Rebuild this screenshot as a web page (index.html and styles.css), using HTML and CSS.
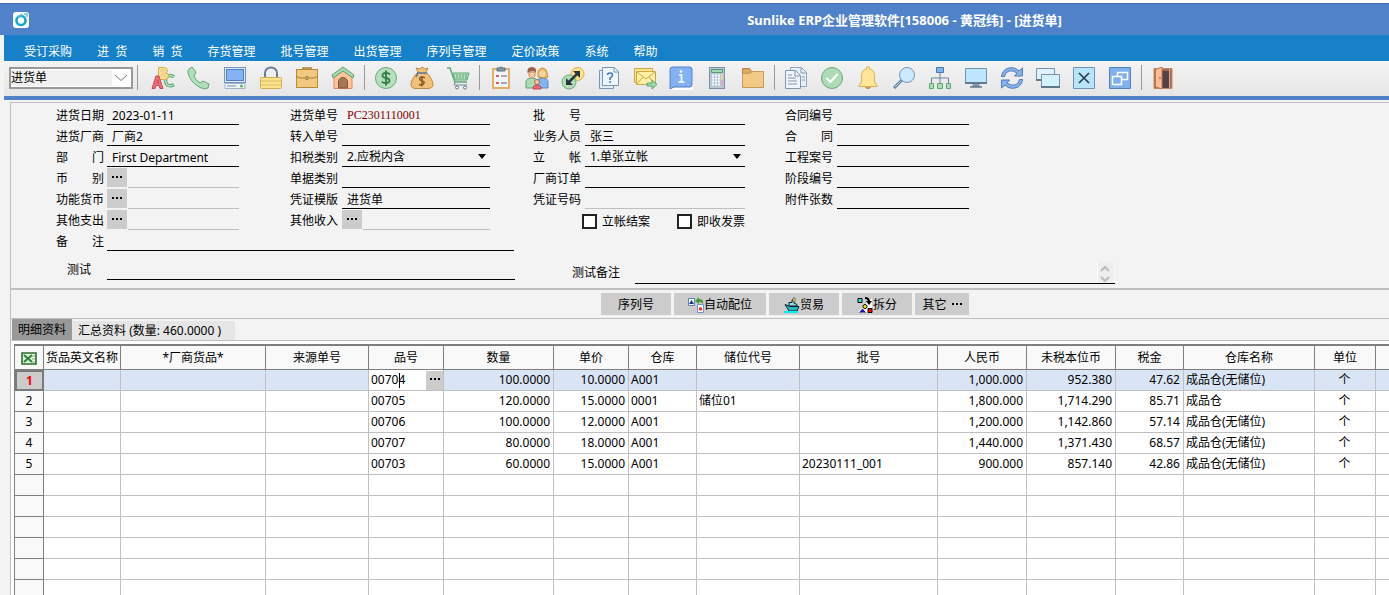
FILE: index.html
```html
<!DOCTYPE html>
<html lang="zh-CN">
<head>
<meta charset="utf-8">
<title>Sunlike ERP企业管理软件</title>
<link rel="stylesheet" href="styles.css">
</head>
<body>
<header class="titlebar">
  <svg class="logo" viewBox="0 0 16 16"><rect width="16" height="16" rx="3" fill="#fff"/><circle cx="8" cy="8.5" r="4.500" fill="none" stroke="#12a5d0" stroke-width="2.600"/><path d="M8 4.500l3 4-3 3-3-3z" fill="#fff"/><path d="M5 5L9 2M11 2h3v3" fill="none" stroke="#5cc6e2" stroke-width="1.500"/></svg>
  <h1>Sunlike ERP企业管理软件[158006 - 黄冠纬] - [进货单]</h1>
</header>
<div class="frame">
<nav class="menu">
  <a href="#">受订采购</a><a href="#">进&nbsp;&nbsp;货</a><a href="#">销&nbsp;&nbsp;货</a><a href="#">存货管理</a><a href="#">批号管理</a><a href="#">出货管理</a><a href="#">序列号管理</a><a href="#">定价政策</a><a href="#">系统</a><a href="#">帮助</a>
</nav>
<div class="toolbar">
  <div class="combo"><select aria-label="单据类型"><option>进货单</option></select><svg viewBox="0 0 14 8"><path d="M1 1l6 5.500L13 1" fill="none" stroke="#777"/></svg></div>
  <span class="sep first"></span>
  <button aria-label="字体"><svg viewBox="0 0 24 24"><path d="M23 11q-3-2.500-6-1t-2.500 5 3 4.500 5.500-1" fill="none" stroke="#5fa777" stroke-width="3.500"/><path d="M23 11q-3-2.500-6-1t-2.500 5 3 4.500 5.500-1" fill="none" stroke="#b5dfbd" stroke-width="1.500"/><path d="M7.500 1.500h5q4 0 4 3 0 2-2 2.500 3 0 3 3 0 3.500-4 3.500h-6z" fill="#fbe18b" stroke="#d3ae54"/><path d="M10.500 4h2.500v2h-2.500zM10.500 8.500h3v2h-3z" fill="#f3f3f3" stroke="#d3ae54" stroke-width=".6"/><path d="M1 22.500L5 10h3l4 12.500H9l-1-3H5l-1 3zM6 17h1.500L7 14z" fill="#ef6f78" stroke="#c94953"/></svg></button>
  <button aria-label="电话"><svg viewBox="0 0 24 24"><path d="M2 3l3-2 4 5-2 4q1 4 6 7l3-2 6 3-1 4q-3 2-8-.5Q3 16 1 7q-.5-3 1-4z" fill="#b1dfba" stroke="#61a775"/></svg></button>
  <button aria-label="电脑"><svg viewBox="0 0 24 24"><rect x="1.500" y="1.500" width="21" height="15" fill="#dce9f4" stroke="#7695b7"/><rect x="3.500" y="3.500" width="17" height="11" fill="#83b3f3" stroke="#527fc1"/><path d="M2 17.500h20v5H2z" fill="#eef4f8" stroke="#9db3c9"/><path d="M4 20h9" stroke="#6c89a8"/><circle cx="18.500" cy="20" r="1.500" fill="#4eb86c"/></svg></button>
  <button aria-label="锁定"><svg viewBox="0 0 24 24"><path d="M6 11V7a6 5.500 0 0 1 12 0v4" fill="none" stroke="#657f9b" stroke-width="2"/><rect x="1.500" y="11.500" width="21" height="11" rx="1" fill="#fbe38c" stroke="#d5ae55"/><path d="M2 15h20M2 19h20" stroke="#dfbe6a"/></svg></button>
  <button aria-label="公文包"><svg viewBox="0 0 24 24"><path d="M8 4V2h8v2" fill="none" stroke="#a77d32" stroke-width="1.500"/><rect x="1.500" y="3.500" width="21" height="18" fill="#f0c880" stroke="#b98a36"/><path d="M2 10q0 2 4 2h12q4 0 4-2" fill="none" stroke="#a77d32"/><path d="M11 10.500h2v3h-2z" fill="#f6dda0" stroke="#8e6727" stroke-width=".8"/></svg></button>
  <button aria-label="首页"><svg viewBox="0 0 24 24"><path d="M3 9l9-5 9 5v13.500H3z" fill="#ffc39a" stroke="#d78b62"/><path d="M1 9L12 1l11 8-1 3-10-7-10 7z" fill="#a7dab2" stroke="#5e9f70"/><path d="M7.500 22v-6a4.500 4.500 0 0 1 9 0v6z" fill="#a77751" stroke="#7a563e"/></svg></button>
  <span class="sep"></span>
  <button aria-label="金额"><svg viewBox="0 0 24 24"><circle cx="12" cy="12" r="10.500" fill="#b7dfbc" stroke="#69ab7b"/><path d="M16 8.500q-2-2-5-1.500T8.500 10q0 1.500 3.500 2t3.500 2.500Q15.500 17 12 17T8 15.500M12 4.500v15" fill="none" stroke="#327a49" stroke-width="1.800"/></svg></button>
  <button aria-label="钱袋"><svg viewBox="0 0 24 24"><path d="M8 6L6 2l4 1 2-2 3 2 3-1-2 4c3 3 7 8 7 13q0 3-5 3.500H6q-5 0-5-4C1 14 5 9 8 6z" fill="#f0c279" stroke="#bd8840"/><path d="M7 7h10M8 7l-2 4" stroke="#597290" stroke-width="1.500"/><path d="M15 12q-2-1.500-4-.8t-1 2.800l3 1.200q2 1 .5 2.800t-4.500.5M12 10v10.500" fill="none" stroke="#855d2c" stroke-width="1.500"/></svg></button>
  <button aria-label="购物车"><svg viewBox="0 0 24 24"><path d="M1 2h3l5 14h12" fill="none" stroke="#62a879" stroke-width="1.500"/><path d="M7 7h16l-2 7H9z" fill="#b2ddbc" stroke="#62a879"/><path d="M11 8v5M14 8v5M17 8v5M20 8v5" stroke="#62a879"/><path d="M9 16l-1 3h13" fill="none" stroke="#6f87a2"/><circle cx="11" cy="21.500" r="1.500" fill="#fff" stroke="#5c7490"/><circle cx="19" cy="21.500" r="1.500" fill="#fff" stroke="#5c7490"/></svg></button>
  <span class="sep"></span>
  <button aria-label="清单"><svg viewBox="0 0 24 24"><rect x="4" y="3" width="16" height="19" fill="#f3f4f5" stroke="#e5ae66" stroke-width="2"/><path d="M8 2h2q2-2 4 0h2v3H8z" fill="#8496a9" stroke="#5f7285"/><path d="M7 10h3M7 17h3" stroke="#e45865" stroke-width="2"/><path d="M12 10h6M12 17h6" stroke="#8293a7" stroke-width="1.500"/></svg></button>
  <button aria-label="客户"><svg viewBox="0 0 24 24"><path d="M1 22v-7q1-3 5-3h2q4 0 4 4v6z" fill="#abdab4" stroke="#60a672"/><path d="M12 22v-6q1-4 5-4 6 0 6 4v6z" fill="#82b5ec" stroke="#568bc7"/><path d="M13 11V6q1-4 5-4 4 1 4 5l1 4-4 1z" fill="#edc268" stroke="#bd913e"/><path d="M4 6h6v4q-3 4-6 0z" fill="#f8caa0" stroke="#c98f6c"/><path d="M2.500 7q-1-6 4.500-6 5 0 4 6-1-2-3-2-3 0-5.500 2z" fill="#9c6044"/><circle cx="17.500" cy="8" r="3" fill="#f8d0aa"/><path d="M8 23v-2q1-2 4-2t4 2v2z" fill="#ef6a72" stroke="#be4750"/><circle cx="12" cy="16" r="2.500" fill="#f8c69d" stroke="#a76b4a"/></svg></button>
  <button aria-label="转换"><svg viewBox="0 0 24 24"><circle cx="16.500" cy="8" r="6.500" fill="#fce389" stroke="#d5ae4e"/><circle cx="8" cy="16" r="7" fill="#b2dfb9" stroke="#66aa77"/><path d="M8 16l8-8" stroke="#28363f" stroke-width="2.500"/><path d="M12 5h7v7zM5 12v7h7z" fill="#28363f"/></svg></button>
  <button aria-label="帮助文档"><svg viewBox="0 0 24 24"><path d="M2.500 4.500h14v18h-14z" fill="#e1edf7" stroke="#7895b4"/><path d="M5.500 1.500h12l4 4v14h-16z" fill="#eef5fb" stroke="#7895b4"/><path d="M17 2v4h4" fill="none" stroke="#7895b4"/><path d="M10.500 9q0-2 2.500-2t2.500 2-2.500 3v2M12 16h2" fill="none" stroke="#4478bf" stroke-width="1.600"/></svg></button>
  <button aria-label="发送邮件"><svg viewBox="0 0 24 24"><path d="M1.500 2.500h18v14h-18z" fill="#fbe28b" stroke="#cda647"/><path d="M3.500 5.500h19v13h-19z" fill="#fff0a6" stroke="#cda647"/><path d="M4 6l9 7 9-7M4 18l6-7M22 18l-6-7" fill="none" stroke="#cda647"/><path d="M14 17h5v-3l5 4.500-5 4.500v-3h-5z" fill="#9fd8ad" stroke="#5ca472"/></svg></button>
  <button aria-label="信息"><svg viewBox="0 0 24 24"><path d="M0 0h24v24H0z" fill="#fff"/><path d="M3 1h18q2 0 2 2v16q0 2-2 2H5l-4 2V3q0-2 2-2z" fill="#83b1f2" stroke="#537dc3"/><path d="M10 9h2.500v7M9.500 16h6" fill="none" stroke="#fff" stroke-width="1.600"/><circle cx="12" cy="5.500" r="1.300" fill="#fff"/></svg></button>
  <button aria-label="计算器"><svg viewBox="0 0 24 24"><rect x="4.500" y="1.500" width="15" height="21" fill="#b8c8d9" stroke="#7890ab"/><path d="M6.500 3.500h11v3h-11z" fill="#a4d9b0" stroke="#56996b"/><path d="M7 9.500h8M7 12.500h8M7 15.500h8M7 18.500h8" stroke="#f7fbff" stroke-width="2" stroke-dasharray="2 1"/><path d="M16 9.500h2M16 12.500h2" stroke="#ffd978" stroke-width="2"/><path d="M16 15.500h2M16 18.500h2" stroke="#ef9ba0" stroke-width="2"/></svg></button>
  <button aria-label="文件夹"><svg viewBox="0 0 24 24"><path d="M1.500 2.500h7l2 3H22v15H1.500z" fill="#d9a966" stroke="#b78140"/><path d="M1.500 7.500h7l3-2h11v16h-21z" fill="#f3ca85" stroke="#c99a55"/></svg></button>
  <span class="sep"></span>
  <button aria-label="复制"><svg viewBox="0 0 24 24"><path d="M6.500 1.500h11l5 5v14h-16z" fill="#e7f0f7" stroke="#93a6b8"/><path d="M17 2v5h5M18 11h3M18 14h3" fill="none" stroke="#8296aa"/><path d="M1.500 4.500h10l5 5v13h-15z" fill="#eff5fa" stroke="#8296aa"/><path d="M11 5v5h5M4 9h4M4 12h8M4 15h9M4 18h9" fill="none" stroke="#8296aa"/></svg></button>
  <button aria-label="确认"><svg viewBox="0 0 24 24"><circle cx="12" cy="12" r="10.500" fill="#aedbb6" stroke="#67aa79"/><path d="M6.500 12l4 4 7-8" fill="none" stroke="#fff" stroke-width="2"/></svg></button>
  <button aria-label="提醒"><svg viewBox="0 0 24 24"><path d="M9.500 20.500a2.500 2 0 0 0 5 0z" fill="#dca84c" stroke="#bd8638"/><path d="M10.500 3V1h3v2q5 1 5 7v5q0 3 2.500 3.500v2H3v-2Q5.500 18 5.500 15v-5q0-6 5-7z" fill="#ffe797" stroke="#d9b05c"/></svg></button>
  <button aria-label="查找"><svg viewBox="0 0 24 24"><path d="M10 14l-8 8" stroke="#6683a4" stroke-width="3"/><path d="M9 15l-6 6" stroke="#b8cadc"/><circle cx="15" cy="9" r="7.500" fill="#cceaff" stroke="#7595b8"/></svg></button>
  <button aria-label="组织结构"><svg viewBox="0 0 24 24"><path d="M12 6v11M3.500 17v-5h17v5" fill="none" stroke="#6c849e"/><path d="M8.500 1.500h7v5h-7z" fill="#83b1ef" stroke="#4b75b7"/><path d="M1.500 17.500h4v5h-4zM9.500 17.500h5v5h-5zM18.500 17.500h4v5h-4z" fill="#b0ddb7" stroke="#5ea770"/></svg></button>
  <button aria-label="显示器"><svg viewBox="0 0 24 24"><path d="M9 17h6l1 4H8z" fill="#8597aa"/><path d="M6 21h12" stroke="#64798f" stroke-width="1.500"/><path d="M1.500 2.500h21v15h-21z" fill="#bde5fd" stroke="#7891ab"/><path d="M1 17h22" stroke="#64798f" stroke-width="2"/></svg></button>
  <button aria-label="刷新"><svg viewBox="0 0 24 24"><path d="M1.500 10.500Q2 5 7 2.500q7-2.500 12 2.500l3.500-3v8h-8l2.500-3q-4-3-8-2-4 1-4.500 5.500zM22.500 13.500q-.5 5.500-5.500 8-7 2.500-12-2.500l-3.500 3v-8h8L7 17q4 3 8 2 4-1 4.500-5.500z" fill="#85b2ee" stroke="#527cb9"/></svg></button>
  <button aria-label="窗口"><svg viewBox="0 0 24 24"><path d="M.5 2.500h18v12H.5z" fill="#dff2fe" stroke="#7891aa"/><path d="M0 14h19" stroke="#627991" stroke-width="2"/><path d="M5.500 8.500h18v12h-18z" fill="#d3f1ff" stroke="#7891aa"/><path d="M5 21h19" stroke="#627991" stroke-width="2"/></svg></button>
  <button aria-label="关闭窗口"><svg viewBox="0 0 24 24"><path d="M1.500 1.500h21v21h-21z" fill="#b9e4fb" stroke="#7293b9"/><path d="M7 7l10 10M17 7L7 17" stroke="#28394a" stroke-width="1.600"/></svg></button>
  <button aria-label="层叠窗口"><svg viewBox="0 0 24 24"><path d="M1.500 1.500h21v21h-21z" fill="#82b0ee" stroke="#527fbd"/><path d="M9.500 6.500h10v7h-10z" fill="#82b0ee" stroke="#fff" stroke-width="1.500"/><path d="M4.500 10.500h9v8h-9z" fill="#82b0ee" stroke="#fff" stroke-width="1.500"/></svg></button>
  <span class="sep"></span>
  <button aria-label="退出"><svg viewBox="0 0 24 24"><path d="M3 2.500h18v20H3z" fill="#a6674d" stroke="#c68766"/><path d="M11 5h7v17h-7z" fill="#4e434b"/><path d="M4.500 3.500L11 1v22l-6.500-2z" fill="#ffbd94" stroke="#ba7451"/><path d="M9 11v2" stroke="#784731"/><path d="M18.500 3v19" stroke="#e8aa85"/></svg></button>
</div>
<main class="doc">
  <form class="form">
    <div class="fields">
      <div class="field"><label for="f1">进货日期</label><input id="f1" value="2023-01-11"></div>
      <div class="field"><label for="f2">进货单号</label><input id="f2" class="number" value="PC2301110001"></div>
      <div class="field"><label for="f3">批　　号</label><input id="f3"></div>
      <div class="field"><label for="f4">合同编号</label><input id="f4"></div>

      <div class="field"><label for="f5">进货厂商</label><input id="f5" value="厂商2"></div>
      <div class="field"><label for="f6">转入单号</label><input id="f6"></div>
      <div class="field"><label for="f7">业务人员</label><input id="f7" value="张三"></div>
      <div class="field"><label for="f8">合　　同</label><input id="f8"></div>

      <div class="field"><label for="f9">部　　门</label><input id="f9" value="First Department"></div>
      <div class="field"><label for="f10">扣税类别</label><div class="drop"><select id="f10"><option>2.应税内含</option></select></div></div>
      <div class="field"><label for="f11">立　　帐</label><div class="drop"><select id="f11"><option>1.单张立帐</option></select></div></div>
      <div class="field"><label for="f12">工程案号</label><input id="f12"></div>

      <div class="field"><label for="f13">币　　别</label><button type="button" class="more" aria-label="选择币别"></button><input id="f13" class="dim"></div>
      <div class="field"><label for="f14">单据类别</label><input id="f14"></div>
      <div class="field"><label for="f15">厂商订单</label><input id="f15"></div>
      <div class="field"><label for="f16">阶段编号</label><input id="f16"></div>

      <div class="field"><label for="f17">功能货币</label><button type="button" class="more" aria-label="选择功能货币"></button><input id="f17" class="dim"></div>
      <div class="field"><label for="f18">凭证模版</label><input id="f18" value="进货单"></div>
      <div class="field"><label for="f19">凭证号码</label><input id="f19" class="dim"></div>
      <div class="field"><label for="f20">附件张数</label><input id="f20"></div>

      <div class="field"><label for="f21">其他支出</label><button type="button" class="more" aria-label="选择其他支出"></button><input id="f21" class="dim"></div>
      <div class="field"><label for="f22">其他收入</label><button type="button" class="more" aria-label="选择其他收入"></button><input id="f22" class="dim"></div>
      <div class="checks"><label><input type="checkbox">立帐结案</label><label><input type="checkbox">即收发票</label></div>

      <div class="field remark"><label for="f23">备　　注</label><input id="f23"></div>
    </div>
    <div class="tests">
      <div class="field test"><label for="f24">测试</label><input id="f24"></div>
      <div class="field memo"><label for="f25">测试备注</label><textarea id="f25" rows="1"></textarea>
        <svg viewBox="0 0 16 20"><path d="M0 0h16v20H0z" fill="#eee"/><path d="M0 0v20" stroke="#fff" stroke-width="2"/><path d="M4 9l4-4 4 4M4 15l4 4 4-4" fill="none" stroke="#bbb" stroke-width="2"/></svg></div>
    </div>
  </form>
  <div class="actions">
    <button class="b-serial">序列号</button>
    <button class="b-auto"><svg viewBox="0 0 16 16"><path d="M.5 1.500h6v7h-6z" fill="#fff" stroke="#5c81c4"/><path d="M1 7l2.500-4L6 7z" fill="#153b91"/><path d="M7 4l4-4v2q5 0 4 5-1-2-4-2v2z" fill="#4a9c35"/><path d="M9.500 7.500h6v8h-6z" fill="#fff" stroke="#6b94cf"/><circle cx="12.500" cy="12" r="1.800" fill="#e53a1c"/></svg>自动配位</button>
    <button class="b-trade"><svg viewBox="0 0 16 16"><path d="M1 7.500l5 2h9l-2 4.500H5z" fill="#2bb5bd" stroke="#123"/><path d="M5 9V5.500h3V3h2v3l3 1.500V9z" fill="#7fe0e6" stroke="#123"/><path d="M9 1h2v4H9z" fill="#ffe657" stroke="#123" stroke-width=".5"/><path d="M0 15h14" stroke="#00f0f0" stroke-width="2"/></svg>贸易</button>
    <button class="b-split"><svg viewBox="0 0 16 16"><path d="M1 15L15 1v14z" fill="#fff"/><path d="M1 1.500h4v4H1z" fill="#36e2ee" stroke="#000"/><path d="M8 1q4 0 4 4" fill="none" stroke="#000" stroke-width="2"/><path d="M9 4h6l-3 4z"/><circle cx="8" cy="9.500" r="2" fill="#ffe900" stroke="#000"/><path d="M2 15.500l3.500-4 3.500 4z" fill="#16169e"/><path d="M11 11.500h4v4h-4z" fill="#f00" stroke="#000"/></svg>拆分</button>
    <button class="b-other">其它<span class="dots"></span></button>
  </div>
  <div class="tabs" role="tablist"><button role="tab" aria-selected="true">明细资料</button><button role="tab" aria-selected="false">汇总资料 (数量: 460.0000 )</button></div>
  <div class="sheet">
  <table>
    <colgroup><col class="w29"><col class="w77"><col class="w145"><col class="w103"><col class="w75"><col class="w110"><col class="w75"><col class="w68"><col class="w103"><col class="w138"><col class="w89"><col class="w89"><col class="w68"><col class="w131"><col class="w61"><col></colgroup>
    <thead><tr><th><svg class="xls" viewBox="0 0 16 13"><path d="M1 1h14v11H1z" fill="#e8f3e2" stroke="#2f6b2f" stroke-width="1.600"/><path d="M3 3l8 7M11 3l-8 7" stroke="#2f8736" stroke-width="2.200"/><path d="M11 4h3M11 7h3M11 10h3" stroke="#85b985"/></svg></th><th>货品英文名称</th><th>*厂商货品*</th><th>来源单号</th><th>品号</th><th>数量</th><th>单价</th><th>仓库</th><th>储位代号</th><th>批号</th><th>人民币</th><th>未税本位币</th><th>税金</th><th>仓库名称</th><th>单位</th><th></th></tr></thead>
    <tbody>
    <tr class="current"><th>1</th><td></td><td></td><td></td><td class="edit"><div><input aria-label="品号" value="00704"><span class="caret"></span><button class="more" aria-label="选择品号"></button></div></td><td class="r">100.0000</td><td class="r">10.0000</td><td>A001</td><td></td><td></td><td class="r">1,000.000</td><td class="r">952.380</td><td class="r">47.62</td><td>成品仓(无储位)</td><td class="c">个</td><td></td></tr>
    <tr><th>2</th><td></td><td></td><td></td><td>00705</td><td class="r">120.0000</td><td class="r">15.0000</td><td>0001</td><td>储位01</td><td></td><td class="r">1,800.000</td><td class="r">1,714.290</td><td class="r">85.71</td><td>成品仓</td><td class="c">个</td><td></td></tr>
    <tr><th>3</th><td></td><td></td><td></td><td>00706</td><td class="r">100.0000</td><td class="r">12.0000</td><td>A001</td><td></td><td></td><td class="r">1,200.000</td><td class="r">1,142.860</td><td class="r">57.14</td><td>成品仓(无储位)</td><td class="c">个</td><td></td></tr>
    <tr><th>4</th><td></td><td></td><td></td><td>00707</td><td class="r">80.0000</td><td class="r">18.0000</td><td>A001</td><td></td><td></td><td class="r">1,440.000</td><td class="r">1,371.430</td><td class="r">68.57</td><td>成品仓(无储位)</td><td class="c">个</td><td></td></tr>
    <tr><th>5</th><td></td><td></td><td></td><td>00703</td><td class="r">60.0000</td><td class="r">15.0000</td><td>A001</td><td></td><td>20230111_001</td><td class="r">900.000</td><td class="r">857.140</td><td class="r">42.86</td><td>成品仓(无储位)</td><td class="c">个</td><td></td></tr>
    <tr><th></th><td></td><td></td><td></td><td></td><td></td><td></td><td></td><td></td><td></td><td></td><td></td><td></td><td></td><td></td><td></td></tr>
    <tr><th></th><td></td><td></td><td></td><td></td><td></td><td></td><td></td><td></td><td></td><td></td><td></td><td></td><td></td><td></td><td></td></tr>
    <tr><th></th><td></td><td></td><td></td><td></td><td></td><td></td><td></td><td></td><td></td><td></td><td></td><td></td><td></td><td></td><td></td></tr>
    <tr><th></th><td></td><td></td><td></td><td></td><td></td><td></td><td></td><td></td><td></td><td></td><td></td><td></td><td></td><td></td><td></td></tr>
    <tr><th></th><td></td><td></td><td></td><td></td><td></td><td></td><td></td><td></td><td></td><td></td><td></td><td></td><td></td><td></td><td></td></tr>
    <tr><th></th><td></td><td></td><td></td><td></td><td></td><td></td><td></td><td></td><td></td><td></td><td></td><td></td><td></td><td></td><td></td></tr>
    </tbody>
  </table>
  </div>
</main>
</div>
</body>
</html>
```
FILE: styles.css
```css
* { box-sizing: border-box; }
body {
  margin: 0;
  padding-top: 3px;
  height: 100vh;
  overflow: hidden;
  display: flex;
  flex-direction: column;
  background: #fff;
  color: #000;
  font: 12px/16px "Noto Sans", "Noto Sans CJK SC", sans-serif;
}
button, input, select, textarea {
  margin: 0;
  padding: 0;
  border: 0;
  border-radius: 0;
  background: none;
  color: inherit;
  font: inherit;
  outline: 0;
}
svg { display: block; flex: none; }

.titlebar {
  display: flex;
  align-items: center;
  height: 32px;
  padding-left: 13px;
  border-top: 1px solid #3e68a8;
  background: #5082c9;
  color: #fff;
}
.logo { width: 16px; height: 16px; }
.titlebar h1 { flex: 1; margin: 0 0 0 391px; text-align: center; font-size: 13px; line-height: 16px; white-space: nowrap; }
.frame { flex: 1; min-height: 0; border-left: 4px solid #f3f3f3; display: flex; flex-direction: column; }

.menu { display: flex; gap: 25px; height: 26px; padding: 9px 0 0 20px; background: #1680c9; }
.menu a { color: #fff; text-decoration: none; white-space: nowrap; }

.toolbar {
  display: flex;
  align-items: center;
  height: 35px;
  padding: 0 0 2px 5px;
  background: linear-gradient(#f3f3f3, #e6e6e6);
}
.toolbar button { width: 36px; height: 26px; display: flex; align-items: center; justify-content: center; }
.toolbar button svg { width: 24px; height: 24px; }
.sep { width: 2px; height: 25px; margin: 0 3px 0 2px; border-right: 1px solid #999; flex: none; }
.sep.first { margin-right: 7px; }
.combo { display: flex; align-items: center; width: 124px; height: 22px; border: 2px solid #999; background: #fff; padding-right: 3px; margin-right: 1px; }
.combo select { flex: 1; height: 16px; appearance: none; background: #f0f0f0; }
.combo svg { width: 14px; height: 8px; margin-left: 2px; }

.doc { flex: 1; min-height: 0; padding: 2px 0 0 6px; border-top: 4px solid #5082c9; background: #f3f3f3; display: flex; flex-direction: column; }
.form { border: solid #bfbfbf; border-width: 1px 0 2px 1px; padding: 1px 0 5px 45px; }
.fields { display: grid; grid-template-columns: 234px 243px 252px 184px; grid-auto-rows: 21px; }
.field { display: flex; align-items: center; }
.fields .field { padding-right: 51px; }
.fields .field:nth-child(4n+2) { padding-right: 43px; }
.fields .field:nth-child(4n+3) { padding-right: 40px; }
.fields .field:nth-child(4n) { padding-right: 0; }
.field label { flex: none; width: 51px; padding-top: 3px; white-space: nowrap; }
.fields .field:nth-child(4n+2) label,
.fields .field:nth-child(4n+3) label,
.fields .field:nth-child(4n) label { width: 52px; }
.field input, .drop { flex: 1; min-width: 0; height: 21px; border-bottom: 1px solid #000; padding: 2px 5px 0; }
.field input.dim { border-color: #bfbfbf; margin-left: 1px; }
.field label + input.dim { margin-left: 0; }
.field input.number { color: #800000; font-family: "Liberation Serif", serif; }
.drop { position: relative; display: flex; }
.drop select { flex: 1; appearance: none; }
.drop::after { content: ""; position: absolute; right: 4px; top: 8px; border: solid transparent; border-width: 5px 4px 0; border-top-color: #000; }
.more { flex: none; width: 20px; height: 19px; background: #ccc; }
.more::before, .dots::before { content: ""; display: block; width: 10px; height: 2px; margin: 0 auto 2px; background: repeating-linear-gradient(90deg, #000 0 2px, transparent 2px 4px); }
.dots { margin-left: 5px; }
.checks { display: flex; justify-content: space-between; align-items: center; margin: 4px 40px 0 49px; }
.checks label { display: flex; align-items: center; gap: 5px; white-space: nowrap; }
.checks input { appearance: none; width: 15px; height: 15px; border: 2px solid #222; background: #fff; }
.fields .field.remark { grid-column: 1 / 3; padding-right: 19px; }
.fields .field.remark label { width: 51px; }
.tests { display: flex; align-items: flex-start; height: 32px; padding-top: 8px; }
.test { width: 459px; padding-left: 11px; }
.test label { width: 40px; padding: 0; }
.memo { width: 543px; margin: 3px 0 0 57px; position: relative; }
.memo label { width: 63px; padding: 0; }
.memo textarea { flex: 1; height: 22px; border-bottom: 1px solid #000; resize: none; overflow: hidden; }
.memo svg { position: absolute; right: 2px; top: 0; width: 16px; height: 20px; }

.actions { display: flex; align-items: center; gap: 3px; height: 29px; padding-left: 590px; border: solid #bfbfbf; border-width: 0 0 1px 1px; }
.actions button { display: flex; align-items: center; justify-content: center; height: 22px; padding-top: 2px; background: #ccc; white-space: nowrap; }
.actions svg { width: 16px; height: 16px; }
.b-serial, .b-trade, .b-split { width: 70px; }
.b-auto { width: 92px; }
.b-other { width: 54px; }

.tabs { display: flex; align-items: flex-end; height: 22px; padding-left: 1px; border: solid #bfbfbf; border-width: 0 0 1px 1px; }
.tabs button { min-width: 163px; height: 19px; padding: 0 6px; background: #e6e6e6; text-align: left; white-space: nowrap; }
.tabs button[aria-selected="true"] { min-width: 0; height: 21px; background: #999; }

.sheet { flex: 1; min-height: 0; overflow: hidden; padding: 3px 0 0 3px; border-left: 1px solid #bfbfbf; background: #fff; }
table { width: 100%; table-layout: fixed; border-collapse: separate; border-spacing: 0; border: solid #7f7f7f; border-width: 2px 0 0 1px; }
th, td { height: 21px; padding: 0 3px 0 2px; border: solid #c0c0c0; border-width: 0 1px 1px 0; font-weight: 400; text-align: left; white-space: nowrap; overflow: hidden; line-height: 16px; }
th { border-color: #7f7f7f; background: #f9f9f9; text-align: center; padding: 0; }
tr > :last-child { border-right: 0; }
thead th { height: 24px; padding-top: 1px; }
.current td { background: #d9e5f5; }
.current th { border: 2px solid #7a7a7a; background: #ccc; color: #f00; font-weight: 700; line-height: 14px; }
.r { text-align: right; }
.c { text-align: center; }
.current .edit { padding: 0; background: #fff; }
.edit div { position: relative; display: flex; align-items: center; }
.edit input { flex: 1; min-width: 0; padding-left: 2px; }
.edit .more { width: 17px; }
.caret { position: absolute; left: 30px; top: 2px; width: 1px; height: 15px; background: #000; }
.xls { width: 16px; height: 13px; margin: 0 auto; }
.w29 { width: 29px; }
.w61 { width: 61px; }
.w68 { width: 68px; }
.w75 { width: 75px; }
.w77 { width: 77px; }
.w89 { width: 89px; }
.w103 { width: 103px; }
.w110 { width: 110px; }
.w131 { width: 131px; }
.w138 { width: 138px; }
.w145 { width: 145px; }
```
